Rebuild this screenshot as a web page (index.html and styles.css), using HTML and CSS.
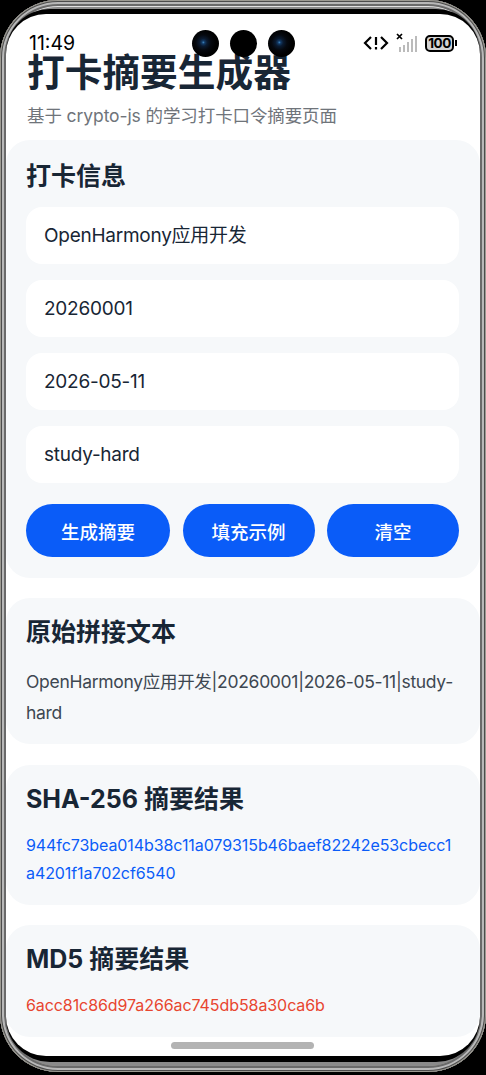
FILE: index.html
```html
<!DOCTYPE html>
<html lang="en">
<head>
    <meta charset="UTF-8">
    <meta name="viewport" content="width=device-width, initial-scale=1.0">
    <title>打卡摘要生成器</title>
    <link rel="stylesheet" href="styles.css">
</head>
<body>
    <div class="phone">
        <div class="bezel">
        <div class="screen">
            <div class="statusbar">
                <span class="clock">11:49</span>
                <div class="status-right">
                    <svg class="nfc" width="26" height="18" viewBox="0 0 26 18">
                        <path d="M8 3 L2 9 L8 15 M18 3 L24 9 L18 15" fill="none" stroke="#000" stroke-width="2.2"/>
                        <path d="M13 3 V11 M13 13 V15.5" fill="none" stroke="#000" stroke-width="2.2"/>
                    </svg>
                    <svg class="signal" width="22" height="20" viewBox="0 0 22 20">
                        <path d="M1 1 L6 6 M6 1 L1 6" stroke="#000" stroke-width="1.7"/>
                        <rect x="3" y="14" width="2" height="5" fill="#bbb"/>
                        <rect x="7" y="12" width="2" height="7" fill="#bbb"/>
                        <rect x="11" y="9" width="2" height="10" fill="#bbb"/>
                        <rect x="15" y="6" width="2" height="13" fill="#bbb"/>
                        <rect x="19" y="3" width="2" height="16" fill="#bbb"/>
                    </svg>
                    <div class="battery"><span class="battery-level">100</span></div>
                    <div class="battery-tip"></div>
                </div>
            </div>
            <div class="cameras">
                <div class="cam lens"></div>
                <div class="cam"></div>
                <div class="cam lens"></div>
            </div>

            <div class="content">
                <h1 class="title">打卡摘要生成器</h1>
                <p class="subtitle">基于 crypto-js 的学习打卡口令摘要页面</p>

                <div class="card form-card">
                    <h2 class="card-title">打卡信息</h2>
                    <div class="field">OpenHarmony应用开发</div>
                    <div class="field">20260001</div>
                    <div class="field">2026-05-11</div>
                    <div class="field">study-hard</div>
                    <div class="actions">
                        <button class="btn btn-wide">生成摘要</button>
                        <button class="btn">填充示例</button>
                        <button class="btn">清空</button>
                    </div>
                </div>

                <div class="card">
                    <h2 class="card-title">原始拼接文本</h2>
                    <p class="raw">OpenHarmony应用开发|20260001|2026-05-11|study-hard</p>
                </div>

                <div class="card">
                    <h2 class="card-title">SHA-256 摘要结果</h2>
                    <p class="hash hash-sha">944fc73bea014b38c11a079315b46baef82242e53cbecc1a4201f1a702cf6540</p>
                </div>

                <div class="card">
                    <h2 class="card-title">MD5 摘要结果</h2>
                    <p class="hash hash-md5">6acc81c86d97a266ac745db58a30ca6b</p>
                </div>
            </div>
            <div class="home-bar"></div>
        </div>
        </div>
    </div>
</body>
</html>
```

FILE: styles.css
```css
* {
  box-sizing: border-box;
  margin: 0;
  padding: 0;
}

html, body {
  width: 486px;
  height: 1075px;
  overflow: hidden;
  background: #000;
}

body {
  font-family: "Inter", "Noto Sans CJK SC", sans-serif;
  color: #182635;
}

/* Device frame */
.phone {
  width: 486px;
  height: 1072px;
  padding: 9px 6px 10px 6px;
  border-radius: 58px;
  background: #8a8a8a;
  box-shadow:
    inset 0 0 0 1px #9c9a92,
    inset 0 0 0 2px #4c4c4c,
    inset 0 0 0 4px #b8b8b8,
    inset 0 0 0 6px #6a6a6a,
    inset 0 -3px 0 3px #c4c0b4,
    inset 0 3px 0 4px #e2e2e2;
}

.bezel {
  height: 100%;
  padding: 5px 0 4px;
  border-radius: 44px;
  background: #000;
}

.screen {
  position: relative;
  width: 474px;
  height: 1042px;
  overflow: hidden;
  border-radius: 40px;
  background: #fff;
}

/* Status bar */
.statusbar {
  position: absolute;
  top: 14px;
  left: 0;
  right: 0;
  z-index: 2;
  display: flex;
  justify-content: space-between;
  align-items: center;
  height: 30px;
  padding: 0 23px 0 23px;
}

.clock {
  font-size: 19.5px;
  color: #000;
}

.status-right {
  display: flex;
  align-items: center;
}

.nfc {
  margin-right: 7px;
}

.signal {
  margin-right: 7px;
}

.battery {
  display: flex;
  align-items: center;
  justify-content: center;
  width: 29px;
  height: 17px;
  border: 2px solid #000;
  border-radius: 5px;
  background: #d4d4d4;
}

.battery-level {
  font-size: 13.5px;
  font-weight: 700;
  letter-spacing: -0.5px;
  color: #000;
}

.battery-tip {
  width: 2px;
  height: 6px;
  margin-left: 1px;
  background: #000;
}

.cameras {
  position: absolute;
  top: 16px;
  left: 185.5px;
  z-index: 3;
  display: flex;
  gap: 11px;
}

.cam {
  width: 27px;
  height: 27px;
  border-radius: 50%;
  background: #000;
}

.lens {
  background: radial-gradient(circle at 42% 46%, #3f86c0 0, #123a66 7%, #0a1a30 18%, #05080e 36%, #000 60%);
}

/* Content */
.content {
  padding-top: 35px;
}

.title {
  height: 46px;
  padding-left: 21px;
  font-size: 37.7px;
  font-weight: 700;
  line-height: 46px;
}

.subtitle {
  height: 26px;
  margin-top: 8px;
  margin-bottom: 11px;
  padding-left: 21px;
  font-size: 17.5px;
  line-height: 26px;
  letter-spacing: -0.1px;
  color: #6f747a;
}

.card {
  margin-bottom: 20.5px;
  padding: 17px 21px 18px 20px;
  border-radius: 24px;
  background: #f6f8fa;
}

.card-title {
  font-size: 25px;
  font-weight: 700;
  line-height: 34px;
}

.form-card {
  margin-bottom: 20px;
  padding-top: 19px;
  padding-bottom: 21px;
}

.field {
  display: flex;
  align-items: center;
  height: 57px;
  margin-top: 16px;
  padding-left: 18px;
  border-radius: 16px;
  background: #fff;
  font-size: 19px;
  letter-spacing: -0.25px;
}

.form-card .field:first-of-type {
  margin-top: 14px;
  padding-bottom: 5px;
}

.actions {
  display: flex;
  gap: 12.5px;
  margin-top: 21px;
}

.btn {
  flex: 1;
  height: 53px;
  border: 0;
  border-radius: 27px;
  background: #0a5cf8;
  color: #fff;
  font-family: inherit;
  font-size: 18.5px;
  font-weight: 500;
}

.btn-wide {
  flex: 0 0 144px;
}

.raw {
  margin-top: 16.5px;
  margin-bottom: -1.5px;
  margin-right: -2px;
  font-size: 17.5px;
  line-height: 31px;
  letter-spacing: -0.3px;
  color: #3d4751;
  word-break: break-word;
}

.hash {
  margin-top: 15px;
  font-size: 16px;
  line-height: 28px;
  letter-spacing: -0.08px;
  word-break: break-all;
}

.hash-sha {
  color: #0a5cf8;
}

.hash-md5 {
  color: #e8452f;
}

.home-bar {
  position: absolute;
  left: 165px;
  bottom: 7px;
  width: 143px;
  height: 7px;
  border-radius: 4px;
  background: #b3b3b3;
}
```
